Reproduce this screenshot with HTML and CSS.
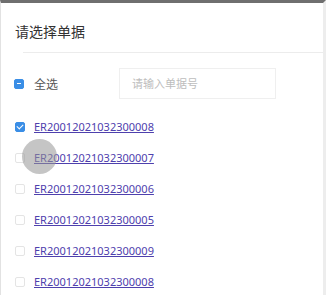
FILE: index.html
```html
<!DOCTYPE html>
<html lang="zh-CN">
<head>
    <meta charset="UTF-8">
    <meta name="viewport" content="width=device-width, initial-scale=1.0">
    <title>请选择单据</title>
    <link rel="stylesheet" href="styles.css">
</head>
<body>
    <div class="panel">
        <div class="title">请选择单据</div>
        <div class="divider"></div>

        <div class="toolbar">
            <label class="check-all">
                <span class="box indeterminate"></span>
                <span>全选</span>
            </label>
            <div class="search">请输入单据号</div>
        </div>

        <ul class="list">
            <li><span class="box checked"></span><a href="#">ER20012021032300008</a></li>
            <li><span class="box"></span><a href="#">ER20012021032300007</a></li>
            <li><span class="box"></span><a href="#">ER20012021032300006</a></li>
            <li><span class="box"></span><a href="#">ER20012021032300005</a></li>
            <li><span class="box"></span><a href="#">ER20012021032300009</a></li>
            <li><span class="box"></span><a href="#">ER20012021032300008</a></li>
        </ul>

        <div class="touch"></div>
    </div>
</body>
</html>
```

FILE: styles.css
```css
* {
    margin: 0;
    padding: 0;
    box-sizing: border-box;
}

body {
    font-family: "Noto Sans", "Noto Sans CJK SC", sans-serif;
    background: #fff;
    width: 326px;
    height: 295px;
    overflow: hidden;
}

.panel {
    position: relative;
    height: 295px;
    border-top: 3px solid #6f6f6f;
    border-left: 1px solid #e2e2e2;
    border-right: 3px solid #ededed;
    padding-top: 17px;
}

.title {
    padding-left: 14px;
    font-size: 14px;
    line-height: 22px;
    color: #333;
    font-family: "Noto Sans CJK SC", sans-serif;
}

.divider {
    margin: 10px 0 0 22px;
    border-top: 1px solid #ececec;
}

.toolbar {
    display: flex;
    align-items: center;
    margin-top: 15px;
    padding-left: 13px;
}

.check-all {
    display: flex;
    align-items: center;
    gap: 10px;
    width: 105px;
    font-size: 12px;
    color: #555;
    font-family: "Noto Sans CJK SC", sans-serif;
}

.search {
    width: 157px;
    height: 31px;
    border: 1px solid #efefef;
    padding-left: 12px;
    line-height: 29px;
    font-size: 11px;
    color: #bdbdbd;
    font-family: "Noto Sans CJK SC", sans-serif;
}

.box {
    display: inline-block;
    width: 10px;
    height: 10px;
    border: 1px solid #e4e4e4;
    border-radius: 2px;
    background: #fff;
    flex-shrink: 0;
    position: relative;
}

.box.checked,
.box.indeterminate {
    background: #3a8ee6;
    border-color: #3a8ee6;
}

.box.indeterminate::after {
    content: "";
    position: absolute;
    left: 2px;
    top: 3px;
    width: 4px;
    height: 1px;
    background: #fff;
}

.box.checked::after {
    content: "";
    position: absolute;
    left: 2px;
    top: 0;
    width: 3px;
    height: 5px;
    border: solid #fff;
    border-width: 0 1px 1px 0;
    transform: rotate(45deg);
}

.list {
    list-style: none;
    margin-top: 12px;
}

.list li {
    display: flex;
    align-items: center;
    gap: 9px;
    height: 31px;
    padding-left: 14px;
}

.list a {
    font-size: 11px;
    color: #4e40ad;
    text-decoration: underline;
}

.touch {
    position: absolute;
    left: 21px;
    top: 136px;
    width: 35px;
    height: 35px;
    border-radius: 50%;
    background: rgba(150, 150, 150, 0.55);
}
```
